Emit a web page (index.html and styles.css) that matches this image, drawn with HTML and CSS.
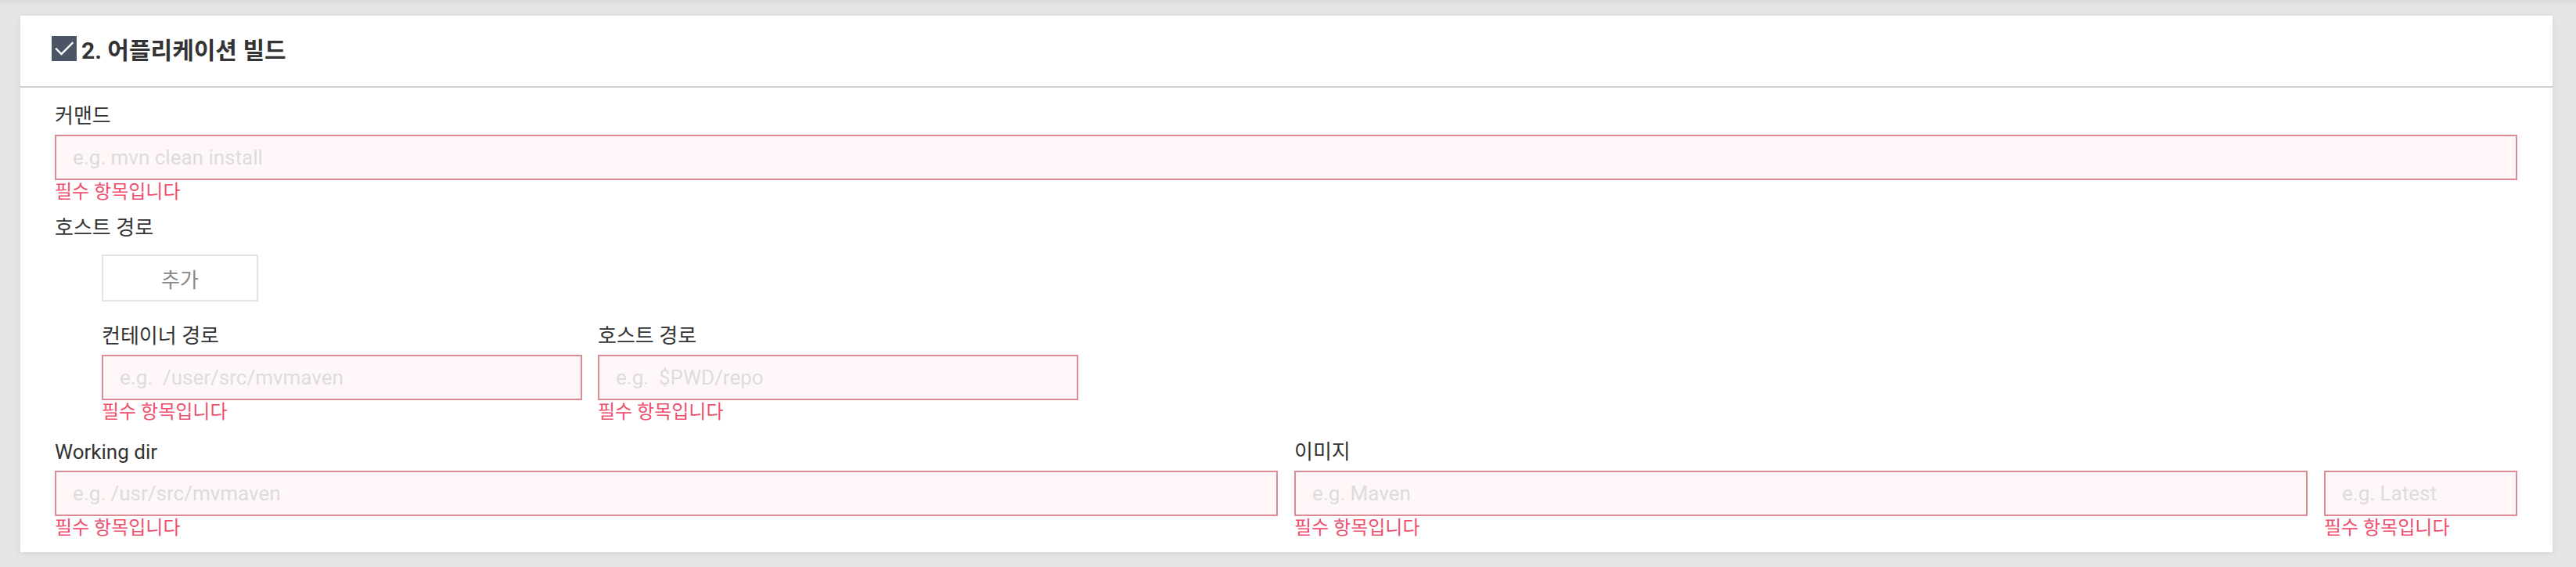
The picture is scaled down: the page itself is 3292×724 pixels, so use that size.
FILE: index.html
```html
<!DOCTYPE html>
<html lang="ko">
<head>
<meta charset="utf-8">
<title>어플리케이션 빌드</title>
<link rel="stylesheet" href="styles.css">
</head>
<body>
<section class="card">
  <header class="card-head">
    <span class="check">
      <svg viewBox="0 0 32 32" width="32" height="32"><path d="M6 16.5 L12.5 23 L26.5 9" fill="none" stroke="#fff" stroke-width="2.4" stroke-linecap="square"/></svg>
    </span>
    <h2 class="title">2. 어플리케이션 빌드</h2>
  </header>
  <div class="card-body">
    <div class="group">
      <label class="label">커맨드</label>
      <input class="field" type="text" placeholder="e.g. mvn clean install">
      <div class="error">필수 항목입니다</div>
    </div>
    <div class="group">
      <label class="label">호스트 경로</label>
      <div class="paths">
        <button class="add-btn" type="button">추가</button>
        <div class="path-row">
          <div class="path-col">
            <label class="label">컨테이너 경로</label>
            <input class="field" type="text" placeholder="e.g.  /user/src/mvmaven">
            <div class="error">필수 항목입니다</div>
          </div>
          <div class="path-col">
            <label class="label">호스트 경로</label>
            <input class="field" type="text" placeholder="e.g.  $PWD/repo">
            <div class="error">필수 항목입니다</div>
          </div>
        </div>
      </div>
    </div>
    <div class="group split">
      <div class="half">
        <label class="label">Working dir</label>
        <input class="field" type="text" placeholder="e.g. /usr/src/mvmaven">
        <div class="error">필수 항목입니다</div>
      </div>
      <div class="half image-row">
        <div class="image-col">
          <label class="label">이미지</label>
          <input class="field" type="text" placeholder="e.g. Maven">
          <div class="error">필수 항목입니다</div>
        </div>
        <div class="tag-col">
          <label class="label label-empty">&nbsp;</label>
          <input class="field" type="text" placeholder="e.g. Latest">
          <div class="error">필수 항목입니다</div>
        </div>
      </div>
    </div>
  </div>
</section>
</body>
</html>
```

FILE: styles.css
```css
html, body {
  margin: 0;
  padding: 0;
}

body {
  background: linear-gradient(#d9d9d9 0, #e6e6e6 8px, #e6e6e6 100%);
  padding: 20px 30px 0 26px;
  font-family: Roboto, "Noto Sans CJK KR", sans-serif;
  color: #333;
  min-height: 724px;
  box-sizing: border-box;
}

.card {
  background: #fff;
  box-shadow: 0 2px 10px rgba(0, 0, 0, 0.08);
}

.card-head {
  height: 90px;
  display: flex;
  align-items: center;
  padding-left: 40px;
  gap: 6px;
  border-bottom: 2px solid #d0d0d0;
  box-sizing: content-box;
}

.check {
  width: 32px;
  height: 32px;
  background: #4b5566;
  display: block;
  flex: none;
  margin-top: -6px;
}

.check svg {
  display: block;
}

.title {
  margin: 0;
  font-size: 30px;
  font-weight: 700;
  line-height: 40px;
  color: #333;
}

.card-body {
  padding: 18px 45px 16px 44px;
}

.group {
  margin-bottom: 13px;
}

.group:last-child {
  margin-bottom: 0;
}

.label {
  display: block;
  font-size: 26px;
  line-height: 36px;
  margin-bottom: 6px;
  color: #333;
}

.field {
  display: block;
  width: 100%;
  height: 58px;
  box-sizing: border-box;
  border: 2px solid #dc8b95;
  background: #fff7f7;
  padding: 0 21px;
  font-family: Roboto, "Noto Sans CJK KR", sans-serif;
  font-size: 26px;
  color: #333;
  margin: 0;
  outline: none;
  border-radius: 0;
}

.field::placeholder {
  color: #dcdcdc;
  opacity: 1;
}

.error {
  font-size: 24px;
  line-height: 30px;
  color: #f04f6d;
}

.paths {
  padding-left: 60px;
}

.add-btn {
  display: block;
  margin-top: 16px;
  width: 200px;
  height: 60px;
  background: #fff;
  border: 2px solid #e3e3e3;
  border-radius: 0;
  font-family: Roboto, "Noto Sans CJK KR", sans-serif;
  font-size: 26px;
  color: #888;
  padding: 0;
}

.path-row {
  display: flex;
  gap: 20px;
  margin-top: 26px;
}

.path-col {
  width: 614px;
}

.split {
  display: flex;
  gap: 21px;
  margin-top: 18px;
}

.half {
  flex: 1 1 0;
  min-width: 0;
}

.image-row {
  display: flex;
  gap: 21px;
}

.image-col {
  flex: 1 1 0;
  min-width: 0;
}

.tag-col {
  width: 247px;
  flex: none;
}
```
